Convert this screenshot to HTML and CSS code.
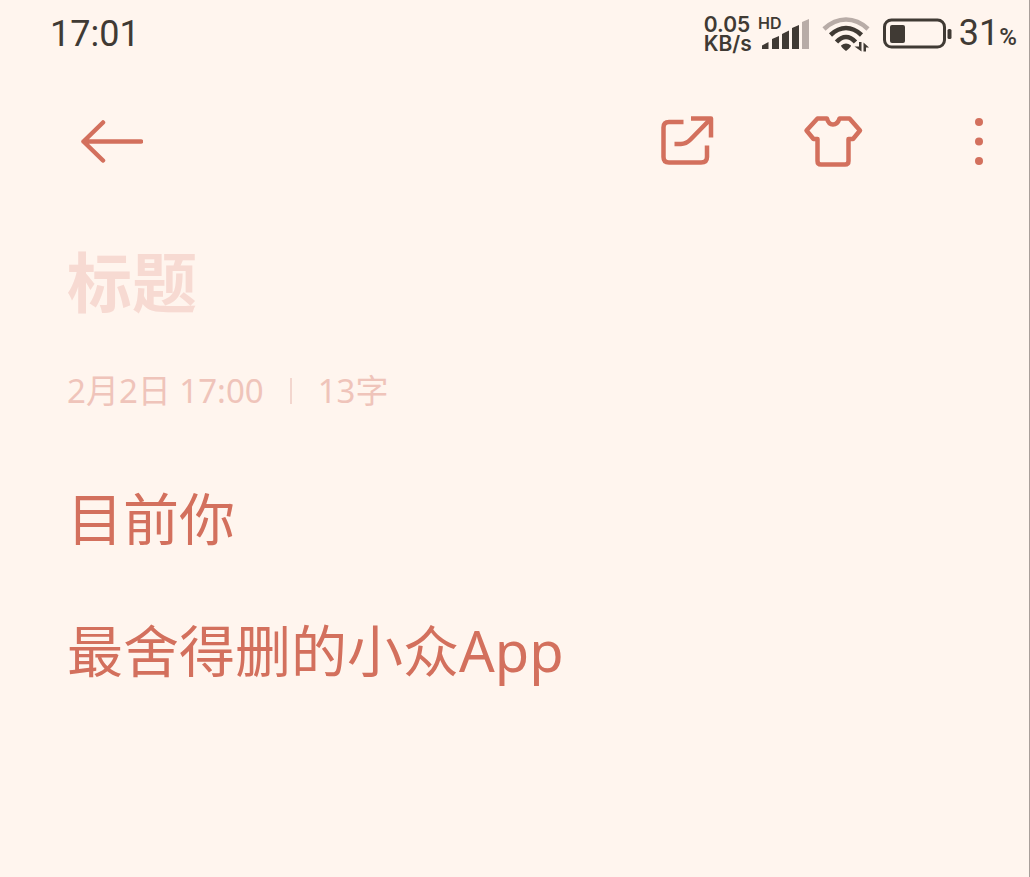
FILE: index.html
```html
<!DOCTYPE html>
<html lang="zh-CN">
<head>
<meta charset="utf-8">
<meta name="viewport" content="width=device-width, initial-scale=1">
<title>笔记</title>
<link rel="stylesheet" href="styles.css">
</head>
<body>
<div class="screen">
  <header class="status">
    <time class="clock">17:01</time>
    <div class="indicators">
      <div class="speed"><span>0.05</span><span>KB/s</span></div>
      <svg class="signal" width="52" height="48" viewBox="757 9 52 48" aria-hidden="true">
        <text class="hd" x="757" y="28">HD</text>
        <g fill="#403a34">
          <path d="M761 48V44.500L767.500 41V48Z"/>
          <path d="M771 48V38L778 35V48Z"/>
          <path d="M781 48V33L788 29.500V48Z"/>
          <path d="M791 48V27L798 24V48Z"/>
        </g>
        <path fill="#b8aca7" d="M801 48V21L808 18V48Z"/>
      </svg>
      <svg class="wifi" width="48" height="38" viewBox="820 14 48 38" fill="none" stroke="#403a34" stroke-width="4.500" aria-hidden="true">
        <path stroke="#b8aca7" d="M822 28Q832 18.500 844 18.500T866 28"/>
        <path d="M828.500 34Q836 27 844 27T859.500 34"/>
        <path d="M834.500 41Q839 36 844 36T853.500 41"/>
        <path fill="#403a34" stroke="none" d="M839 44.500Q844 40.500 849 44.500Q849 46 844 50Q839 46 839 44.500Z"/>
        <path fill="#403a34" stroke="none" d="M857 41H859.500V50.500L852.500 45.500H857ZM861.500 50.500V41.500L867 46.500H864V50.500Z"/>
      </svg>
      <svg class="battery" width="70" height="32" viewBox="881 17 70 32" aria-hidden="true">
        <rect x="883.500" y="19" width="60" height="27" rx="7" fill="none" stroke="#403a34" stroke-width="3"/>
        <rect x="889" y="24" width="15" height="18" rx="2" fill="#403a34"/>
        <rect x="946.500" y="28" width="4" height="10" rx="1.500" fill="#403a34"/>
      </svg>
      <div class="level">31<span class="percent">%</span></div>
    </div>
  </header>

  <nav class="toolbar" aria-label="笔记工具">
    <button class="tool" type="button" aria-label="返回">
      <svg width="64" height="64" viewBox="79 109 64 64"><path d="M141 141.500H83.500M103 122.500L83.500 141.500L103 160.500"/></svg>
    </button>
    <div class="actions">
      <button class="tool" type="button" aria-label="分享">
        <svg width="64" height="64" viewBox="655 109 64 64" stroke-linecap="butt"><path d="M683.500 122H669Q663.500 122 663.500 127.500V157Q663.500 162.500 669 162.500H701Q707 162.500 707 157V145.500M691 118.500H711V137.500M710.500 119L690.500 139.500Q686 144 681 144H674.500"/></svg>
      </button>
      <button class="tool" type="button" aria-label="主题">
        <svg width="64" height="64" viewBox="801 109 64 64"><path d="M817.500 118.500H827Q828.500 124.500 833 124.500T839.500 118.500H849.500L860 130.500L853 139H848.500V161Q848.500 164.500 845 164.500H821Q817.500 164.500 817.500 161V139H813.500L806.500 130.500Z"/></svg>
      </button>
      <button class="tool" type="button" aria-label="更多">
        <svg class="dots" width="64" height="64" viewBox="947 109 64 64"><circle cx="979" cy="122" r="4"/><circle cx="979" cy="141.500" r="4"/><circle cx="979" cy="161" r="4"/></svg>
      </button>
    </div>
  </nav>

  <main class="note">
    <input class="title" type="text" placeholder="标题" aria-label="标题">
    <div class="meta"><time>2月2日 17:00</time><span class="divider"></span><span>13字</span></div>
    <textarea class="content" aria-label="正文" spellcheck="false">目前你

最舍得删的小众App</textarea>
  </main>
</div>
</body>
</html>
```
FILE: styles.css
```css
* {
  box-sizing: border-box;
}

body {
  margin: 0;
  background: #fff5ee;
  color: #403a34;
  font-family: "Noto Sans", "Noto Sans CJK SC", sans-serif;
}

.screen {
  display: flex;
  flex-direction: column;
  min-height: 100vh;
  border-right: 1px solid #a89f9a;
}

.status {
  display: flex;
  justify-content: space-between;
  align-items: center;
  height: 68px;
  padding: 0 12px 0 50px;
}

.clock,
.level {
  font-family: Roboto, sans-serif;
  font-size: 36px;
  line-height: 44px;
}

.indicators {
  display: flex;
  align-items: center;
}

.speed {
  display: flex;
  flex-direction: column;
  margin-right: 6px;
  font-family: Inter, sans-serif;
  font-size: 21px;
  font-weight: 600;
  line-height: 19px;
}

.hd {
  fill: #403a34;
  font-family: Inter, sans-serif;
  font-size: 16px;
  font-weight: 600;
}

.wifi {
  margin: 0 12px;
}

.level {
  margin-left: 7px;
  padding-top: 2px;
}

.percent {
  font-size: 24px;
  font-weight: 500;
}

.toolbar {
  display: flex;
  justify-content: space-between;
  padding: 41px 18px 0 79px;
}

.actions {
  display: flex;
  gap: 82px;
}

.tool {
  display: flex;
  padding: 0;
  border: 0;
  background: none;
  fill: none;
  stroke: #d3705d;
  stroke-width: 4.5px;
  stroke-linecap: round;
  stroke-linejoin: round;
}

.dots {
  fill: #d3705d;
  stroke: none;
}

.note {
  display: flex;
  flex: 1;
  flex-direction: column;
  padding: 58px 67px 0;
}

.title {
  width: 100%;
  height: 96px;
  padding: 0;
  border: 0;
  outline: 0;
  background: none;
  color: #d3705d;
  font: bold 65px/96px "Noto Sans CJK SC", sans-serif;
}

.title::placeholder {
  color: #f7dad2;
  opacity: 1;
}

.meta {
  display: flex;
  align-items: center;
  margin-top: 40px;
  color: #efc4ba;
  font-size: 33px;
  line-height: 48px;
}

.divider {
  width: 2px;
  height: 26px;
  margin: 0 26px;
  background: #f3d6ce;
}

.content {
  flex: 1;
  min-height: 264px;
  margin-top: 70px;
  padding: 0;
  border: 0;
  outline: 0;
  resize: none;
  background: none;
  color: #d3705d;
  font: 56px/66px "Noto Sans", "Noto Sans CJK SC", sans-serif;
}
```
